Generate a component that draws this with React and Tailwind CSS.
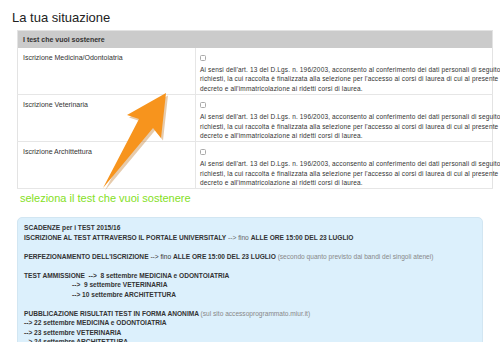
import React from "react";

const consent = [
  "Ai sensi dell'art. 13 del D.Lgs. n. 196/2003, acconsento al conferimento dei dati personali di seguito",
  "richiesti, la cui raccolta è finalizzata alla selezione per l'accesso ai corsi di laurea di cui al presente",
  "decreto e all'immatricolazione ai ridetti corsi di laurea.",
];

const rows = [
  "Iscrizione Medicina/Odontoiatria",
  "Iscrizione Veterinaria",
  "Iscrizione Archittettura",
];

function Arrow() {
  return (
    <svg
      className="pointer-events-none absolute left-0 top-0"
      width="500"
      height="342"
      viewBox="0 0 500 342"
    >
      <polygon
        points="104,189 140,120 128,116 167,94 162,139 154,129"
        fill="#b86a10"
        opacity="0.35"
        transform="translate(1,1.5)"
      />
      <polygon
        points="103,188 139,119 127,115 166,93 161,138 153,128"
        fill="#f7941d"
      />
    </svg>
  );
}

export default function App() {
  return (
    <div className="relative h-[342px] w-[500px] overflow-hidden bg-white font-['Liberation_Sans',Arial,sans-serif] text-[#333]">
      <h1 className="pl-3 pt-[10px] text-[13px] leading-[16px] text-[#222]">
        La tua situazione
      </h1>
      <div className="ml-[17px] mt-[4px] w-[476px]">
        <table className="w-full table-fixed border-collapse border border-[#e3e3e3] text-[7px] leading-[9.5px]">
          <colgroup>
            <col className="w-[178px]" />
            <col />
          </colgroup>
          <thead>
            <tr>
              <th
                colSpan={2}
                className="h-[17px] bg-[#cbcbcb] px-[5px] text-left font-bold text-[#333]"
              >
                I test che vuoi sostenere
              </th>
            </tr>
          </thead>
          <tbody>
            {rows.map((r) => (
              <tr key={r} className="border-b border-[#e6e6e6]">
                <td className="h-[47px] border-r border-[#e6e6e6] px-[5px] pt-[5px] align-top">
                  {r}
                </td>
                <td className="pl-[4px] pr-0 pt-[7px] align-top">
                  <span className="mb-[4px] block h-[6px] w-[6px] rounded-[1.5px] border border-[#aaa] bg-white" />
                  {consent.map((l) => (
                    <span
                      key={l}
                      className="block whitespace-nowrap text-[6.5px] tracking-[0.15px]"
                    >
                      {l}
                    </span>
                  ))}
                </td>
              </tr>
            ))}
          </tbody>
        </table>
      </div>
      <p className="pl-5 pt-[2px] text-[11px] leading-[14px] text-[#84e01e]">
        seleziona il test che vuoi sostenere
      </p>
      <div className="ml-[17px] mt-[12px] w-[466px] rounded-[5px] border border-[#d2e6f2] bg-[#dcf0fc] px-[6px] pt-[5px] pb-4 text-[6.6px] leading-[9.5px] text-[#333]">
        <p className="font-bold">SCADENZE per i TEST 2015/16</p>
        <p>
          <b>ISCRIZIONE AL TEST ATTRAVERSO IL PORTALE UNIVERSITALY</b>{" "}
          <span className="text-[#666]">--&gt; fino</span>{" "}
          <b>ALLE ORE 15:00 DEL 23 LUGLIO</b>
        </p>
        <p className="mt-[9.5px]">
          <b>PERFEZIONAMENTO DELL'ISCRIZIONE</b> --&gt; fino{" "}
          <b>ALLE ORE 15:00 DEL 23 LUGLIO</b>{" "}
          <span className="text-[#888]">
            (secondo quanto previsto dai bandi dei singoli atenei)
          </span>
        </p>
        <div className="mt-[9.5px] font-bold">
          <p>
            TEST AMMISSIONE&nbsp;&nbsp;--&gt;&nbsp; 8 settembre MEDICINA e
            ODONTOIATRIA
          </p>
          <p className="pl-[48px]">--&gt;&nbsp; 9 settembre VETERINARIA</p>
          <p className="pl-[48px]">--&gt; 10 settembre ARCHITETTURA</p>
        </div>
        <div className="mt-[9.5px] font-bold">
          <p>
            PUBBLICAZIONE RISULTATI TEST IN FORMA ANONIMA{" "}
            <span className="font-normal text-[#888]">
              (sul sito accessoprogrammato.miur.it)
            </span>
          </p>
          <p>--&gt; 22 settembre MEDICINA e ODONTOIATRIA</p>
          <p>--&gt; 23 settembre VETERINARIA</p>
          <p>--&gt; 24 settembre ARCHITETTURA</p>
        </div>
      </div>
      <Arrow />
    </div>
  );
}
